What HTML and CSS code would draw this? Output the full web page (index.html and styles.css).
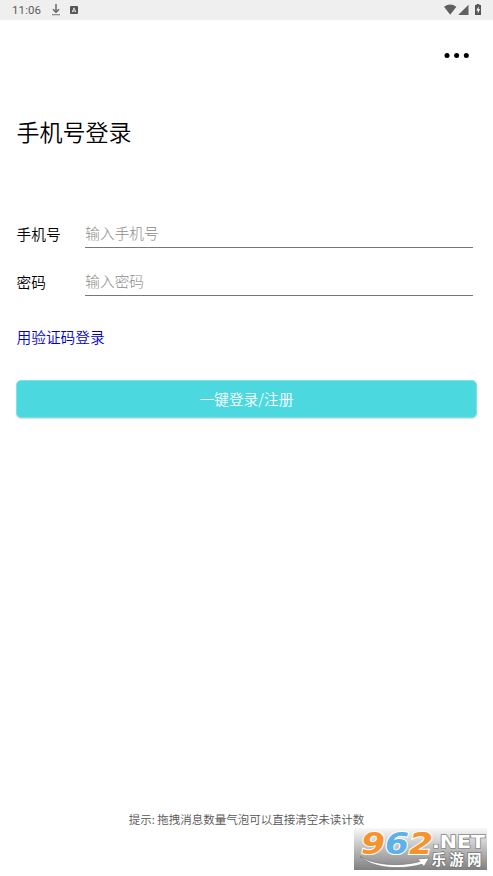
FILE: index.html
```html
<!DOCTYPE html>
<html lang="zh-CN">
<head>
<meta charset="utf-8">
<title>手机号登录</title>
<link rel="stylesheet" href="styles.css">
</head>
<body>
<header class="status">
  <span class="clock">11:06</span>
  <svg class="download" width="10" height="12" viewBox="0 0 10 12"><path d="M5 0v8M2 5.2l3 3 3-3" fill="none" stroke="#686868" stroke-width="1.5"/><path d="M1 10.7h8" stroke="#888" stroke-width="1.2"/></svg>
  <svg class="app" width="8" height="8" viewBox="0 0 8 8"><rect width="8" height="8" rx="1" fill="#555"/><path d="M2.2 6.3 4 1.8l1.8 4.5M2.8 5h2.4" fill="none" stroke="#eee" stroke-width=".9"/></svg>
  <svg class="signals" width="40" height="12" viewBox="0 0 40 12"><path d="M0 2.8Q6.2-1.6 12.4 2.8L6.2 10.7z" fill="#606060"/><path d="M14.2 11 24.5.7V11z" fill="#606060"/><path d="M32.7 0h2.6v1H37v10h-6V1h1.7z" fill="#555"/><path d="M34.8 2.2 32.3 6.4h1.5v3l2.3-4.2h-1.5z" fill="#fff"/></svg>
</header>
<main class="page">
  <div class="toolbar">
    <svg width="26" height="7" viewBox="0 0 26 7"><circle cx="3" cy="3.500" r="2.500"/><circle cx="12.6" cy="3.500" r="2.500"/><circle cx="22.3" cy="3.500" r="2.500"/></svg>
  </div>
  <h1 class="title">手机号登录</h1>
  <form class="form">
    <label class="row"><span class="label">手机号</span><span class="field">输入手机号</span></label>
    <label class="row"><span class="label">密码</span><span class="field">输入密码</span></label>
    <a class="switch">用验证码登录</a>
    <button class="submit" type="button">一键登录/注册</button>
  </form>
  <p class="tip">提示: 拖拽消息数量气泡可以直接清空未读计数</p>
</main>
<svg class="watermark" width="133" height="42" viewBox="0 0 133 42">
  <defs>
    <linearGradient id="shade" x1="0" y1="0" x2="0" y2="1"><stop offset="0" stop-color="#f8f8f8"/><stop offset=".5" stop-color="#bcbcbc"/><stop offset="1" stop-color="#808080"/></linearGradient>
  </defs>
  <rect width="133" height="42" fill="url(#shade)"/>
  <path d="M6 28.500C22 38 48 38.500 66 33.500L63.500 31 75 30 70 38.500 68 36.200C48 42 20 41 6 28.500z" fill="#fff" stroke="#777" stroke-width=".7"/>
  <text class="digits" x="7" y="26" textLength="72" lengthAdjust="spacingAndGlyphs"><tspan fill="#f7922c">9</tspan><tspan fill="#5cb1e8">6</tspan><tspan fill="#f7922c">2</tspan></text>
  <text class="net" x="78" y="19.500" textLength="53" lengthAdjust="spacingAndGlyphs">.NET</text>
  <text class="site" x="77.500" y="37.300" textLength="50">乐游网</text>
</svg>
</body>
</html>
```
FILE: styles.css
```css
* { box-sizing: border-box; }
body {
  margin: 0;
  height: 876px;
  overflow: hidden;
  display: flex;
  flex-direction: column;
  background: #fff;
  color: #000;
  font-family: "Noto Sans CJK SC", sans-serif;
  font-weight: 300;
}
svg { display: block; }
.status {
  flex: none;
  height: 20px;
  padding: 0 11px 0 12px;
  display: flex;
  align-items: center;
  background: #efefef;
}
.clock {
  width: 39px;
  color: #5c5c5c;
  font: 400 11.5px/20px Roboto, sans-serif;
  letter-spacing: .1px;
}
.app { margin-left: 9px; }
.signals { margin-left: auto; margin-right: -2px; }
.page {
  flex: 1;
  display: flex;
  flex-direction: column;
  padding: 0 16px;
}
.toolbar {
  height: 71px;
  display: flex;
  align-items: center;
  justify-content: flex-end;
  padding-right: 7px;
}
.title {
  margin: 21px 0 0 .5px;
  font-size: 23px;
  line-height: 38px;
  font-weight: 350;
}
.form {
  margin-top: 61px;
  display: flex;
  flex-direction: column;
}
.row {
  display: flex;
  height: 37px;
  margin: 0 4px 11px .5px;
  font-size: 14.7px;
  line-height: 45px;
}
.label { width: 68.8px; font-weight: 350; }
.field {
  flex: 1;
  height: 37px;
  color: #8c8c8c;
  line-height: 43px;
  border-bottom: 1px solid #777;
}
.switch {
  margin: 18px 0 0 .5px;
  color: #00c;
  font-size: 14.7px;
  line-height: 24px;
  font-weight: 350;
}
.submit {
  height: 38px;
  margin: 31px 0 0;
  padding: 0;
  border: 1px solid #7be2e5;
  border-radius: 5px;
  background: #4cd8df;
  box-shadow: 0 1px 1px #ddd;
  color: #fff;
  font: 350 14.7px/34px "Noto Sans CJK SC", sans-serif;
}
.tip {
  margin: auto 0 48px;
  color: #555;
  font-size: 11.5px;
  line-height: 18px;
  font-weight: 350;
  text-align: center;
}
.watermark {
  position: absolute;
  left: 354px;
  top: 828px;
}
.watermark text {
  font-weight: 700;
  stroke: #fff;
  stroke-width: 2px;
  paint-order: stroke;
}
.watermark .digits {
  font-family: "DejaVu Sans", sans-serif;
  font-size: 31px;
  font-style: italic;
}
.watermark .net {
  fill: #fff;
  stroke: #888;
  stroke-width: 1.5px;
  font-family: "DejaVu Sans", sans-serif;
  font-size: 18px;
}
.watermark .site {
  fill: #fff;
  stroke: #777;
  stroke-width: 1.5px;
  font-family: "Noto Sans CJK SC", sans-serif;
  font-size: 14.5px;
}
```
